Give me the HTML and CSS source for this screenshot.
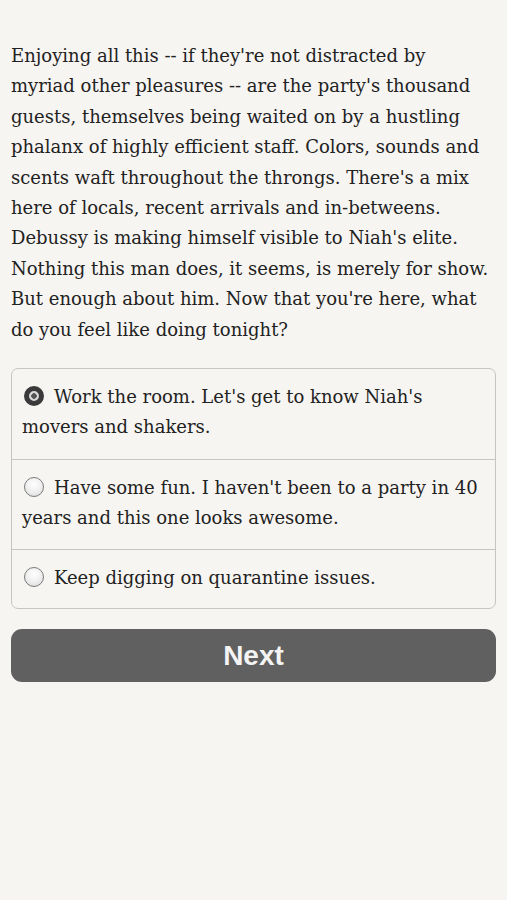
FILE: index.html
```html
<!DOCTYPE html>
<html>
<head>
<meta charset="utf-8">
<link rel="stylesheet" href="styles.css">
</head>
<body>
<main class="page">
  <p class="story">Enjoying all this -- if they're not distracted by<br>myriad other pleasures -- are the party's thousand<br>guests, themselves being waited on by a hustling<br>phalanx of highly efficient staff. Colors, sounds and<br>scents waft throughout the throngs. There's a mix<br>here of locals, recent arrivals and in-betweens.<br>Debussy is making himself visible to Niah's elite.<br>Nothing this man does, it seems, is merely for show.<br>But enough about him. Now that you're here, what<br>do you feel like doing tonight?</p>
  <div class="choices">
    <div class="choice">
      <span class="radio radio-on"></span>Work the room. Let's get to know Niah's<br>movers and shakers.
    </div>
    <div class="choice">
      <span class="radio"></span>Have some fun. I haven't been to a party in 40<br>years and this one looks awesome.
    </div>
    <div class="choice">
      <span class="radio"></span>Keep digging on quarantine issues.
    </div>
  </div>
  <button class="next">Next</button>
</main>
</body>
</html>
```

FILE: styles.css
```css
html, body {
  margin: 0;
  padding: 0;
  background: #f7f5f2;
}
.page {
  padding: 41px 11px 0 11px;
  display: flex;
  flex-direction: column;
}
.story {
  margin: 0;
  font-family: "DejaVu Serif", "Liberation Serif", serif;
  font-size: 18px;
  line-height: 30.4px;
  color: #222;
  white-space: nowrap;
}
.choices {
  margin-top: 23px;
  border: 1px solid #c6c5c3;
  border-radius: 7px;
  display: flex;
  flex-direction: column;
}
.choice {
  padding: 13px 10px 16px 10px;
  font-family: "DejaVu Serif", "Liberation Serif", serif;
  font-size: 18px;
  line-height: 30px;
  color: #222;
  white-space: nowrap;
}
.choice:first-child {
  padding-bottom: 17px;
}
.choice:last-child {
  padding-bottom: 15px;
}
.choice + .choice {
  border-top: 1px solid #c6c5c3;
}
.radio {
  display: inline-block;
  box-sizing: border-box;
  width: 20px;
  height: 20px;
  border-radius: 50%;
  border: 1.5px solid #7a7a7a;
  background: radial-gradient(circle at 50% 35%, #ffffff 0%, #ececec 60%, #d2d2d2 100%);
  vertical-align: -3px;
  margin: 0 10px 0 2px;
}
.radio-on {
  border: 5px solid #3a3a3a;
  background: radial-gradient(circle, #555 0 2.5px, #d8d8d8 3px);
}
.next {
  margin-top: 20px;
  height: 53px;
  border: none;
  border-radius: 11px;
  background: #606060;
  color: #f4f4f4;
  font-family: "Liberation Sans", Arial, sans-serif;
  font-weight: bold;
  font-size: 28px;
  padding: 0;
}
```
